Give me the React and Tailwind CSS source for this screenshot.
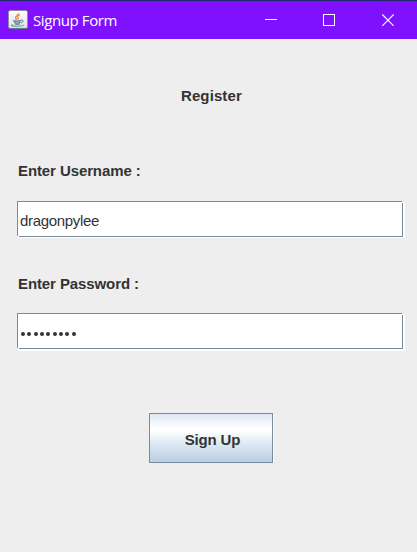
import React from "react";

function JavaIcon() {
  return (
    <svg className="ml-2 h-5 w-5 shrink-0" viewBox="0 0 20 20" fill="none">
      <defs>
        <linearGradient id="tile" x1="0" y1="0" x2="0" y2="1">
          <stop offset="0" stopColor="#ffffff" />
          <stop offset="1" stopColor="#dcdfe1" />
        </linearGradient>
      </defs>
      <rect x="0.5" y="0.5" width="19" height="18" rx="1.8" fill="url(#tile)" stroke="#8b8f9c" />
      <path d="M1.5 18.6h17" stroke="#557a80" strokeWidth="1" />
      <path d="M10.5 3.2c.6 2-3.7 3-2.8 5 .2.7.9 1.1 1.2 1.7" stroke="#e98b45" strokeWidth="1.6" />
      <path d="M12 5c-2.2.9-2.9 1.9-1.8 3 .4.6.2 1-.4 1.8" stroke="#e98b45" strokeWidth="1.1" />
      <path d="M5.2 10.6c1.4.7 6.2.7 7.9 0M6.2 12.4c1.6.6 4.6.6 6.1 0M7 14c1.4.5 3.4.5 4.7 0" stroke="#607f9b" strokeWidth="1.2" />
      <path d="M13 10.2c3-.7 2.8 2-.2 2.8" stroke="#607f9b" strokeWidth="1" />
      <path d="M4.8 14.6c-3 .8-.5 1.7 4.7 1.6 4 0 6.2-.6 5.8-1.4" stroke="#7892a8" strokeWidth="1.1" />
    </svg>
  );
}

function TitleBar() {
  return (
    <header className="flex h-[39px] items-center border-t border-[#20286f] bg-[#7f11ff] text-white">
      <JavaIcon />
      <span className="ml-[5px] w-[190px] whitespace-nowrap font-['Open_Sans',sans-serif] text-[15px] leading-5 tracking-[-0.4px]">
        Signup Form
      </span>
      <svg className="ml-auto mr-[23px] h-[13px] w-[129px] shrink-0" viewBox="0 0 129 13" fill="none" stroke="white">
        <path d="M0 5.5h12M58.5.5h11v11h-11z" shapeRendering="crispEdges" />
        <path d="M117.3.5l11.4 11.4M128.7.5l-11.4 11.4" strokeWidth="1.1" />
      </svg>
    </header>
  );
}

function Field({ children, tall = false }) {
  return (
    <div className={`relative ml-[17px] w-[388px] ${tall ? "h-[38px]" : "h-[37px]"}`}>
      <div className={`absolute left-px right-0 top-px bg-white ${tall ? "h-[37px]" : "h-[36px]"}`} />
      <div className="absolute left-0 top-0 h-px w-[385px] bg-[#7a8a99]" />
      <div className="absolute left-0 top-0 h-[35px] w-px bg-[#7a8a99]" />
      <div className="absolute left-[2px] top-[35px] h-px w-[384px] bg-[#7a8a99]" />
      <div className="absolute left-[385px] top-[2px] h-[34px] w-px bg-[#7a8a99]" />
      <div className="relative flex h-[36px] items-center pl-[3px]">{children}</div>
    </div>
  );
}

function Label({ children }) {
  return (
    <div className="ml-[18px] h-5 whitespace-nowrap text-[15px] font-bold leading-5 tracking-[-0.1px]">{children}</div>
  );
}

export default function App() {
  return (
    <div className="h-[552px] w-[417px] overflow-hidden bg-[#eeeeee] font-['Liberation_Sans',Arial,sans-serif] text-[#333333]">
      <TitleBar />
      <main className="flex flex-col">
        <h1 className="ml-[181px] mt-[47px] h-5 text-[15px] font-bold leading-5 tracking-[0.1px]">Register</h1>
        <div className="mt-[55px]">
          <Label>Enter Username :</Label>
        </div>
        <div className="mt-5">
          <Field>
            <span className="mt-[3px] text-[15px] leading-5 tracking-[-0.33px]">dragonpylee</span>
          </Field>
        </div>
        <div className="mt-9">
          <Label>Enter Password :</Label>
        </div>
        <div className="mt-[19px]">
          <Field tall>
            <div className="ml-px mt-[5px] flex gap-[2.35px]">
              {Array.from({ length: 9 }, (_, i) => (
                <svg key={i} className="h-[4px] w-[4px]" viewBox="0 0 4 4">
                  <circle cx="2" cy="2" r="2" fill="#333333" />
                </svg>
              ))}
            </div>
          </Field>
        </div>
        <button className="ml-[149px] mt-[62px] flex h-[50px] w-[124px] items-center justify-center border border-[#7a8a99] bg-[linear-gradient(to_bottom,#dde8f3_0%,#ffffff_30%,#ffffff_35%,#dde8f3_62%,#b8cfe5_100%)] pl-[3px] pt-1 text-[15px] font-bold leading-5 tracking-[-0.15px] shadow-[1px_0_0_#f8f8f8]">
          Sign Up
        </button>
      </main>
    </div>
  );
}
